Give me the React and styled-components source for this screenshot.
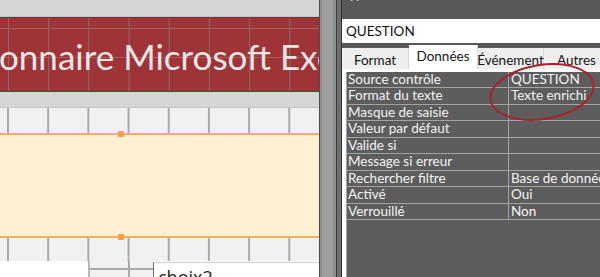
import styled, { createGlobalStyle } from 'styled-components';

const Global = createGlobalStyle`
  html, body { margin: 0; padding: 0; background: #ffffff; }
  body { font-family: Lato, "Liberation Sans", sans-serif; }
`;

const Page = styled.div`
  position: relative;
  width: 600px;
  height: 277px;
  display: flex;
  overflow: hidden;
`;

/* ---------- left : form design canvas ---------- */

const Canvas = styled.div`
  width: 319px;
  display: flex;
  flex-direction: column;
  background: #ffffff;
`;

const GrayBand = styled.div`
  height: ${(p) => p.h}px;
  flex-shrink: 0;
  background: #d5d5d5;
  border-bottom: 1px solid #c4c4c4;
  box-sizing: border-box;
`;

const TitleBand = styled.div`
  height: 75px;
  flex-shrink: 0;
  box-sizing: border-box;
  background-color: #9f3438;
  background-image:
    linear-gradient(to right, #8a6b6b 0 1px, transparent 1px),
    linear-gradient(to bottom, transparent 10px, #b25a5d 10px 11px, transparent 11px 39px, #b25a5d 39px 40px, transparent 40px);
  background-size: 40.2px 100%, 100% 100%;
  background-position: 8px 0, 0 0;
  border-top: 1px solid #8e2a2e;
  border-bottom: 1px solid #8e2a2e;
  display: flex;
  align-items: center;
  overflow: hidden;
`;

const Title = styled.div`
  margin-left: -1px;
  margin-top: 3px;
  white-space: nowrap;
  font-family: Lato, "Liberation Sans", sans-serif;
  font-size: 35px;
  color: #ebe6e6;
`;

const CellRow = styled.div`
  height: ${(p) => p.h}px;
  flex-shrink: 0;
  box-sizing: border-box;
  background-color: #f1f1f1;
  background-image: linear-gradient(to right, #a9a9a9 0 2px, transparent 2px);
  background-size: 40.2px 100%;
  background-position: 7px 0;
`;

const Selected = styled.div`
  position: relative;
  height: 105px;
  flex-shrink: 0;
  box-sizing: border-box;
  background: #fff1d1;
  border-top: 2px solid #f7b054;
  border-bottom: 2px solid #f7b054;
`;

const Handle = styled.span`
  position: absolute;
  left: 118px;
  ${(p) => (p.bottom ? 'bottom: -4px;' : 'top: -4px;')}
  width: 6px;
  height: 6px;
  background: #f6a43a;
`;

const BottomRow = styled.div`
  flex: 1;
  display: flex;
  overflow: hidden;
`;

const WhiteBox = styled.div`
  width: 88px;
  background: #ffffff;
  border-right: 1px solid #b8b8b8;
`;

const SmallCells = styled.div`
  width: 64px;
  background-color: #f1f1f1;
  background-image:
    linear-gradient(to right, #a9a9a9 0 2px, transparent 2px),
    linear-gradient(to bottom, transparent 7px, #a9a9a9 7px 9px, transparent 9px);
  background-size: 40.2px 100%, 100% 100%;
  background-position: 39px 0, 0 0;
`;

const Label = styled.div`
  flex: 1;
  margin-top: 1px;
  padding: 3px 0 0 4px;
  background: #ffffff;
  border-left: 1px solid #707070;
  border-top: 1px solid #d0d0d0;
  font-family: "Open Sans", "Liberation Sans", sans-serif;
  font-size: 18px;
  line-height: 22px;
  color: #222;
`;

/* ---------- splitter ---------- */

const Splitter = styled.div`
  width: 23px;
  display: flex;
  background: #5a5a5a;
`;

const SplitPart = styled.div`
  width: ${(p) => p.w}px;
  background: ${(p) => p.c};
`;

/* ---------- right : property sheet ---------- */

const Sheet = styled.div`
  flex: 1;
  display: flex;
  flex-direction: column;
  background: #585858;
  font-family: Lato, "Liberation Sans", sans-serif;
  font-size: 13.5px;
  overflow: hidden;
`;

const SheetCaption = styled.div`
  height: 19px;
  overflow: hidden;
  white-space: nowrap;
  color: #d8d8d8;
  font-size: 14px;
  line-height: 14px;
  span {
    display: block;
    margin-top: -13px;
  }
`;

const ControlBox = styled.div`
  height: 24px;
  background: #ffffff;
  color: #111;
  padding-left: 4px;
  display: flex;
  align-items: center;
  width: 300px;
`;

const Tabs = styled.div`
  display: flex;
  align-items: flex-end;
  height: 25px;
  margin-top: 1px;
  white-space: nowrap;
`;

const Tab = styled.div`
  width: ${(p) => p.w}px;
  flex-shrink: 0;
  height: ${(p) => (p.active ? 24 : 21)}px;
  box-sizing: border-box;
  display: flex;
  justify-content: center;
  align-items: ${(p) => (p.active ? 'flex-start' : 'center')};
  padding-top: ${(p) => (p.active ? 3 : 2)}px;
  background: ${(p) => (p.active ? '#ffffff' : '#eeeeee')};
  border-right: 1px solid #d8d8d8;
  color: #151515;
`;

const Frame = styled.div`
  flex: 1;
  background: #ffffff;
  padding: 3px 0 0 4px;
  display: flex;
`;

const Grid = styled.div`
  flex: 1;
  background: #5d5d5d;
  border-left: 1px solid #a3a3a3;
  width: 300px;
`;

const Row = styled.div`
  display: grid;
  grid-template-columns: 161px 1fr;
  height: 16.45px;
  box-sizing: border-box;
  border-bottom: 1px solid #a3a3a3;
  color: #f3f3f3;
  line-height: 15px;
  white-space: nowrap;
`;

const Cell = styled.div`
  padding-left: 1px;
  overflow: hidden;
  & + & {
    border-left: 1px solid #a3a3a3;
    padding-left: 2px;
  }
`;

const Ellipse = styled.svg`
  position: absolute;
  left: 484px;
  top: 56px;
  pointer-events: none;
`;

const props = [
  ['Source contrôle', 'QUESTION'],
  ['Format du texte', 'Texte enrichi'],
  ['Masque de saisie', ''],
  ['Valeur par défaut', ''],
  ['Valide si', ''],
  ['Message si erreur', ''],
  ['Rechercher filtre', 'Base de données par défaut'],
  ['Activé', 'Oui'],
  ['Verrouillé', 'Non'],
];

export default function App() {
  return (
    <Page>
      <Global />
      <Canvas>
        <GrayBand h={17} />
        <TitleBand>
          <Title>onnaire Microsoft Excel</Title>
        </TitleBand>
        <GrayBand h={16} />
        <CellRow h={25} />
        <Selected>
          <Handle />
          <Handle bottom />
        </Selected>
        <CellRow h={23} />
        <BottomRow>
          <WhiteBox />
          <SmallCells />
          <Label>choix2</Label>
        </BottomRow>
      </Canvas>

      <Splitter>
        <SplitPart w={1} c="#4c4c4c" />
        <SplitPart w={2} c="#8d8d8d" />
        <SplitPart w={11} c="#9e9e9e" />
        <SplitPart w={3} c="#8d8d8d" />
        <SplitPart w={1} c="#3c3c3c" />
        <SplitPart w={4} c="#6e6e6e" />
        <SplitPart w={1} c="#2e2e2e" />
      </Splitter>

      <Sheet>
        <SheetCaption>
          <span>Type de sélection : Zone de texte</span>
        </SheetCaption>
        <ControlBox>QUESTION</ControlBox>
        <Tabs>
          <Tab w={67}>Format</Tab>
          <Tab w={69} active>Données</Tab>
          <Tab w={66}>Événement</Tab>
          <Tab w={66}>Autres</Tab>
        </Tabs>
        <Frame>
          <Grid>
            {props.map(([name, value]) => (
              <Row key={name}>
                <Cell>{name}</Cell>
                <Cell>{value}</Cell>
              </Row>
            ))}
          </Grid>
        </Frame>
      </Sheet>

      <Ellipse width="118" height="72" viewBox="0 0 118 72">
        <ellipse
          cx="58"
          cy="36"
          rx="52"
          ry="27"
          transform="rotate(-9 58 36)"
          fill="none"
          stroke="#a8232b"
          strokeWidth="2"
        />
      </Ellipse>
    </Page>
  );
}
